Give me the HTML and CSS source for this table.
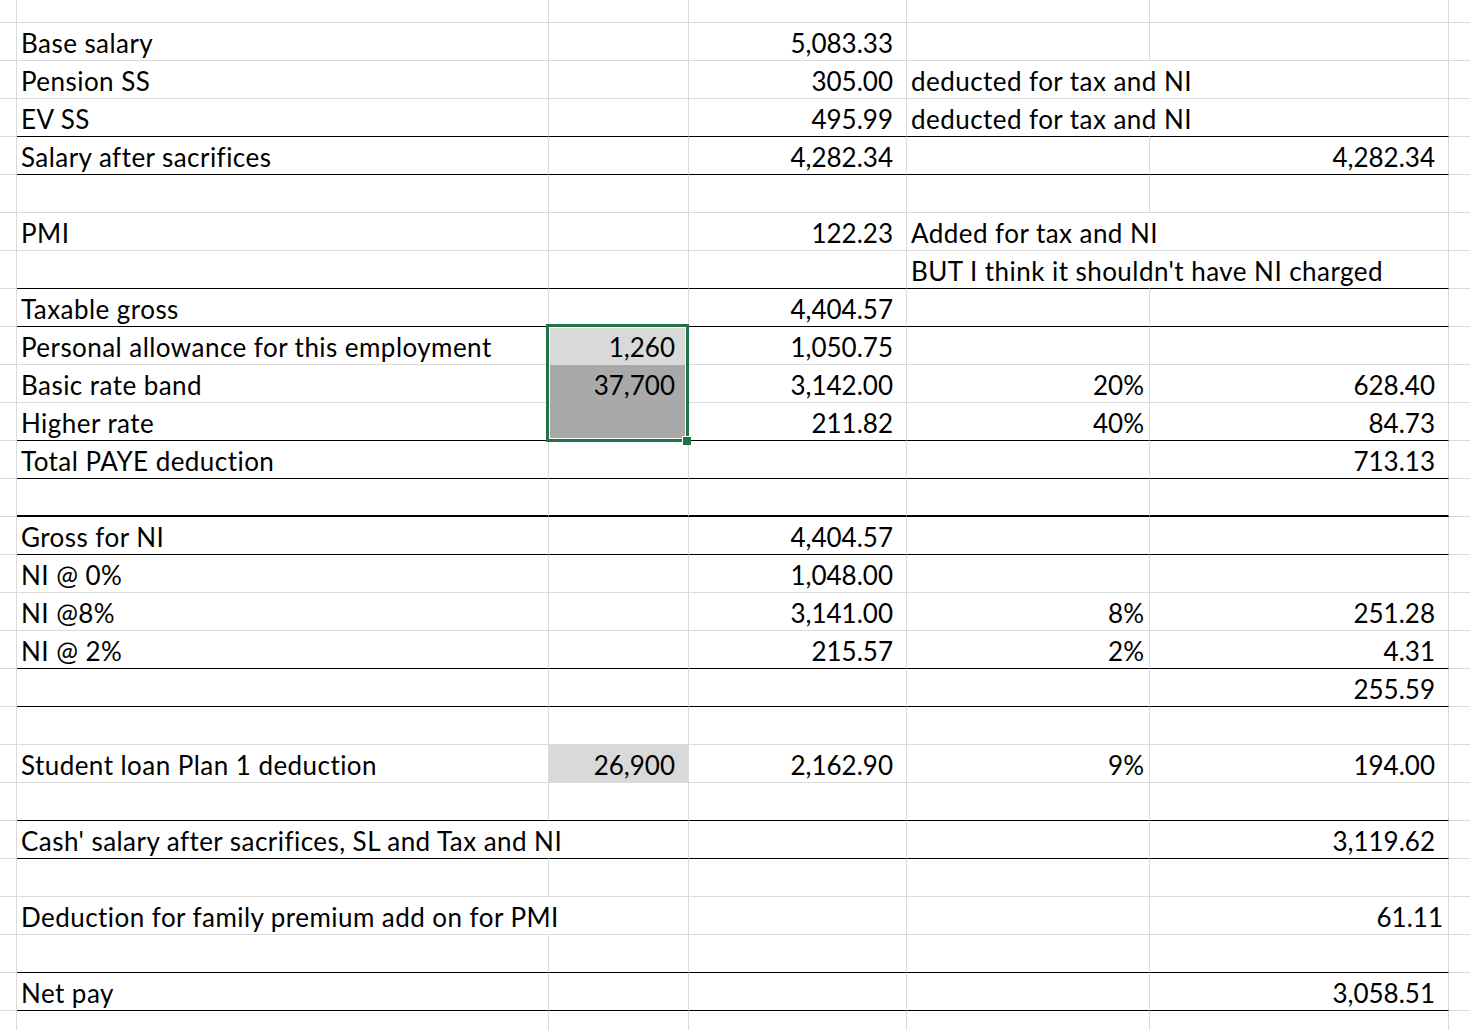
FILE: index.html
```html
<!DOCTYPE html>
<html lang="en">
<head>
<meta charset="utf-8">
<title>Salary sheet</title>
<link rel="stylesheet" href="styles.css">
</head>
<body>
<div class="sheet">
  <div class="row first"><div class="c"></div><div class="c"></div><div class="c"></div><div class="c"></div><div class="c"></div><div class="c"></div><div class="c"></div></div>

  <div class="row"><div class="c"></div><div class="c txt">Base salary</div><div class="c"></div><div class="c num">5,083.33</div><div class="c"></div><div class="c"></div><div class="c"></div></div>
  <div class="row"><div class="c"></div><div class="c txt">Pension SS</div><div class="c"></div><div class="c num">305.00</div><div class="c txt ov">deducted for tax and NI</div><div class="c"></div><div class="c"></div></div>
  <div class="row blk"><div class="c"></div><div class="c txt">EV SS</div><div class="c"></div><div class="c num">495.99</div><div class="c txt ov">deducted for tax and NI</div><div class="c"></div><div class="c"></div></div>
  <div class="row blk"><div class="c"></div><div class="c txt">Salary after sacrifices</div><div class="c"></div><div class="c num">4,282.34</div><div class="c"></div><div class="c num">4,282.34</div><div class="c"></div></div>
  <div class="row"><div class="c"></div><div class="c"></div><div class="c"></div><div class="c"></div><div class="c"></div><div class="c"></div><div class="c"></div></div>
  <div class="row"><div class="c"></div><div class="c txt">PMI</div><div class="c"></div><div class="c num">122.23</div><div class="c txt ov">Added for tax and NI</div><div class="c"></div><div class="c"></div></div>
  <div class="row blk"><div class="c"></div><div class="c"></div><div class="c"></div><div class="c"></div><div class="c txt ov">BUT I think it shouldn't have NI charged</div><div class="c"></div><div class="c"></div></div>
  <div class="row blk"><div class="c"></div><div class="c txt">Taxable gross</div><div class="c"></div><div class="c num">4,404.57</div><div class="c"></div><div class="c"></div><div class="c"></div></div>
  <div class="row"><div class="c"></div><div class="c txt">Personal allowance for this employment</div><div class="c num fill-light">1,260</div><div class="c num">1,050.75</div><div class="c"></div><div class="c"></div><div class="c"></div></div>
  <div class="row"><div class="c"></div><div class="c txt">Basic rate band</div><div class="c num fill-sel">37,700</div><div class="c num">3,142.00</div><div class="c pct">20%</div><div class="c num">628.40</div><div class="c"></div></div>
  <div class="row blk"><div class="c"></div><div class="c txt">Higher rate</div><div class="c num fill-sel"></div><div class="c num">211.82</div><div class="c pct">40%</div><div class="c num">84.73</div><div class="c"></div></div>
  <div class="row blk"><div class="c"></div><div class="c txt">Total PAYE deduction</div><div class="c"></div><div class="c"></div><div class="c"></div><div class="c num">713.13</div><div class="c"></div></div>
  <div class="row blk thick"><div class="c"></div><div class="c"></div><div class="c"></div><div class="c"></div><div class="c"></div><div class="c"></div><div class="c"></div></div>

  <div class="row blk"><div class="c"></div><div class="c txt">Gross for NI</div><div class="c"></div><div class="c num">4,404.57</div><div class="c"></div><div class="c"></div><div class="c"></div></div>
  <div class="row"><div class="c"></div><div class="c txt">NI @ 0%</div><div class="c"></div><div class="c num">1,048.00</div><div class="c"></div><div class="c"></div><div class="c"></div></div>
  <div class="row"><div class="c"></div><div class="c txt">NI @8%</div><div class="c"></div><div class="c num">3,141.00</div><div class="c pct">8%</div><div class="c num">251.28</div><div class="c"></div></div>
  <div class="row blk"><div class="c"></div><div class="c txt">NI @ 2%</div><div class="c"></div><div class="c num">215.57</div><div class="c pct">2%</div><div class="c num">4.31</div><div class="c"></div></div>
  <div class="row blk"><div class="c"></div><div class="c"></div><div class="c"></div><div class="c"></div><div class="c"></div><div class="c num">255.59</div><div class="c"></div></div>
  <div class="row"><div class="c"></div><div class="c"></div><div class="c"></div><div class="c"></div><div class="c"></div><div class="c"></div><div class="c"></div></div>
  <div class="row"><div class="c"></div><div class="c txt">Student loan Plan 1 deduction</div><div class="c num fill-light">26,900</div><div class="c num">2,162.90</div><div class="c pct">9%</div><div class="c num">194.00</div><div class="c"></div></div>
  <div class="row blk"><div class="c"></div><div class="c"></div><div class="c"></div><div class="c"></div><div class="c"></div><div class="c"></div><div class="c"></div></div>
  <div class="row blk"><div class="c"></div><div class="c txt ov">Cash' salary after sacrifices, SL and Tax and NI</div><div class="c"></div><div class="c"></div><div class="c"></div><div class="c num">3,119.62</div><div class="c"></div></div>
  <div class="row"><div class="c"></div><div class="c"></div><div class="c"></div><div class="c"></div><div class="c"></div><div class="c"></div><div class="c"></div></div>
  <div class="row"><div class="c"></div><div class="c txt ov">Deduction for family premium add on for PMI</div><div class="c"></div><div class="c"></div><div class="c"></div><div class="c pct">61.11</div><div class="c"></div></div>
  <div class="row blk"><div class="c"></div><div class="c"></div><div class="c"></div><div class="c"></div><div class="c"></div><div class="c"></div><div class="c"></div></div>
  <div class="row blk"><div class="c"></div><div class="c txt">Net pay</div><div class="c"></div><div class="c"></div><div class="c"></div><div class="c num">3,058.51</div><div class="c"></div></div>
  <div class="row"><div class="c"></div><div class="c"></div><div class="c"></div><div class="c"></div><div class="c"></div><div class="c"></div><div class="c"></div></div>

  <div class="selection"><div class="handle"></div></div>
</div>
</body>
</html>
```

FILE: styles.css
```css
html, body {
  margin: 0;
  padding: 0;
  background: #fff;
}
body {
  width: 1470px;
  height: 1030px;
  overflow: hidden;
  font-family: Lato, "Open Sans", sans-serif;
  font-size: 26px;
  color: #000;
}
.sheet {
  position: relative;
}
.row {
  display: grid;
  grid-template-columns: 17px 532px 140px 218px 243px 299px 1fr;
  height: 38px;
}
.row.first {
  height: 23px;
}
.c {
  box-sizing: border-box;
  border-right: 1px solid #dadada;
  border-bottom: 1px solid #dadada;
  display: flex;
  align-items: flex-end;
  line-height: 30px;
  padding-bottom: 2px;
  white-space: nowrap;
  min-width: 0;
}
.c:last-child {
  border-right: none;
}
.txt {
  padding-left: 4px;
  letter-spacing: 0.45px;
  overflow: visible;
  position: relative;
  z-index: 1;
}
.txt.ov {
  border-right-color: transparent;
}
.num {
  justify-content: flex-end;
  padding-right: 13px;
}
.pct {
  justify-content: flex-end;
  padding-right: 5px;
}
.row.blk .c:nth-child(n+2):nth-child(-n+6) {
  border-bottom-color: #000;
}
.row.thick .c:nth-child(n+2):nth-child(-n+6) {
  border-bottom-width: 2px;
}
.fill-light {
  background: #d9d9d9;
  border-bottom-color: #d9d9d9;
}
.fill-sel {
  background: #a9a9a9;
  border-bottom-color: #a9a9a9;
}
.selection {
  position: absolute;
  left: 546px;
  top: 324px;
  width: 143px;
  height: 118px;
  box-sizing: border-box;
  border: 3px solid #217346;
  box-shadow: inset 0 0 0 1px #fff;
  pointer-events: none;
  z-index: 2;
}
.handle {
  position: absolute;
  right: -5px;
  bottom: -6px;
  width: 8px;
  height: 8px;
  background: #217346;
  border-left: 1px solid #fff;
  border-top: 1px solid #fff;
}
```
